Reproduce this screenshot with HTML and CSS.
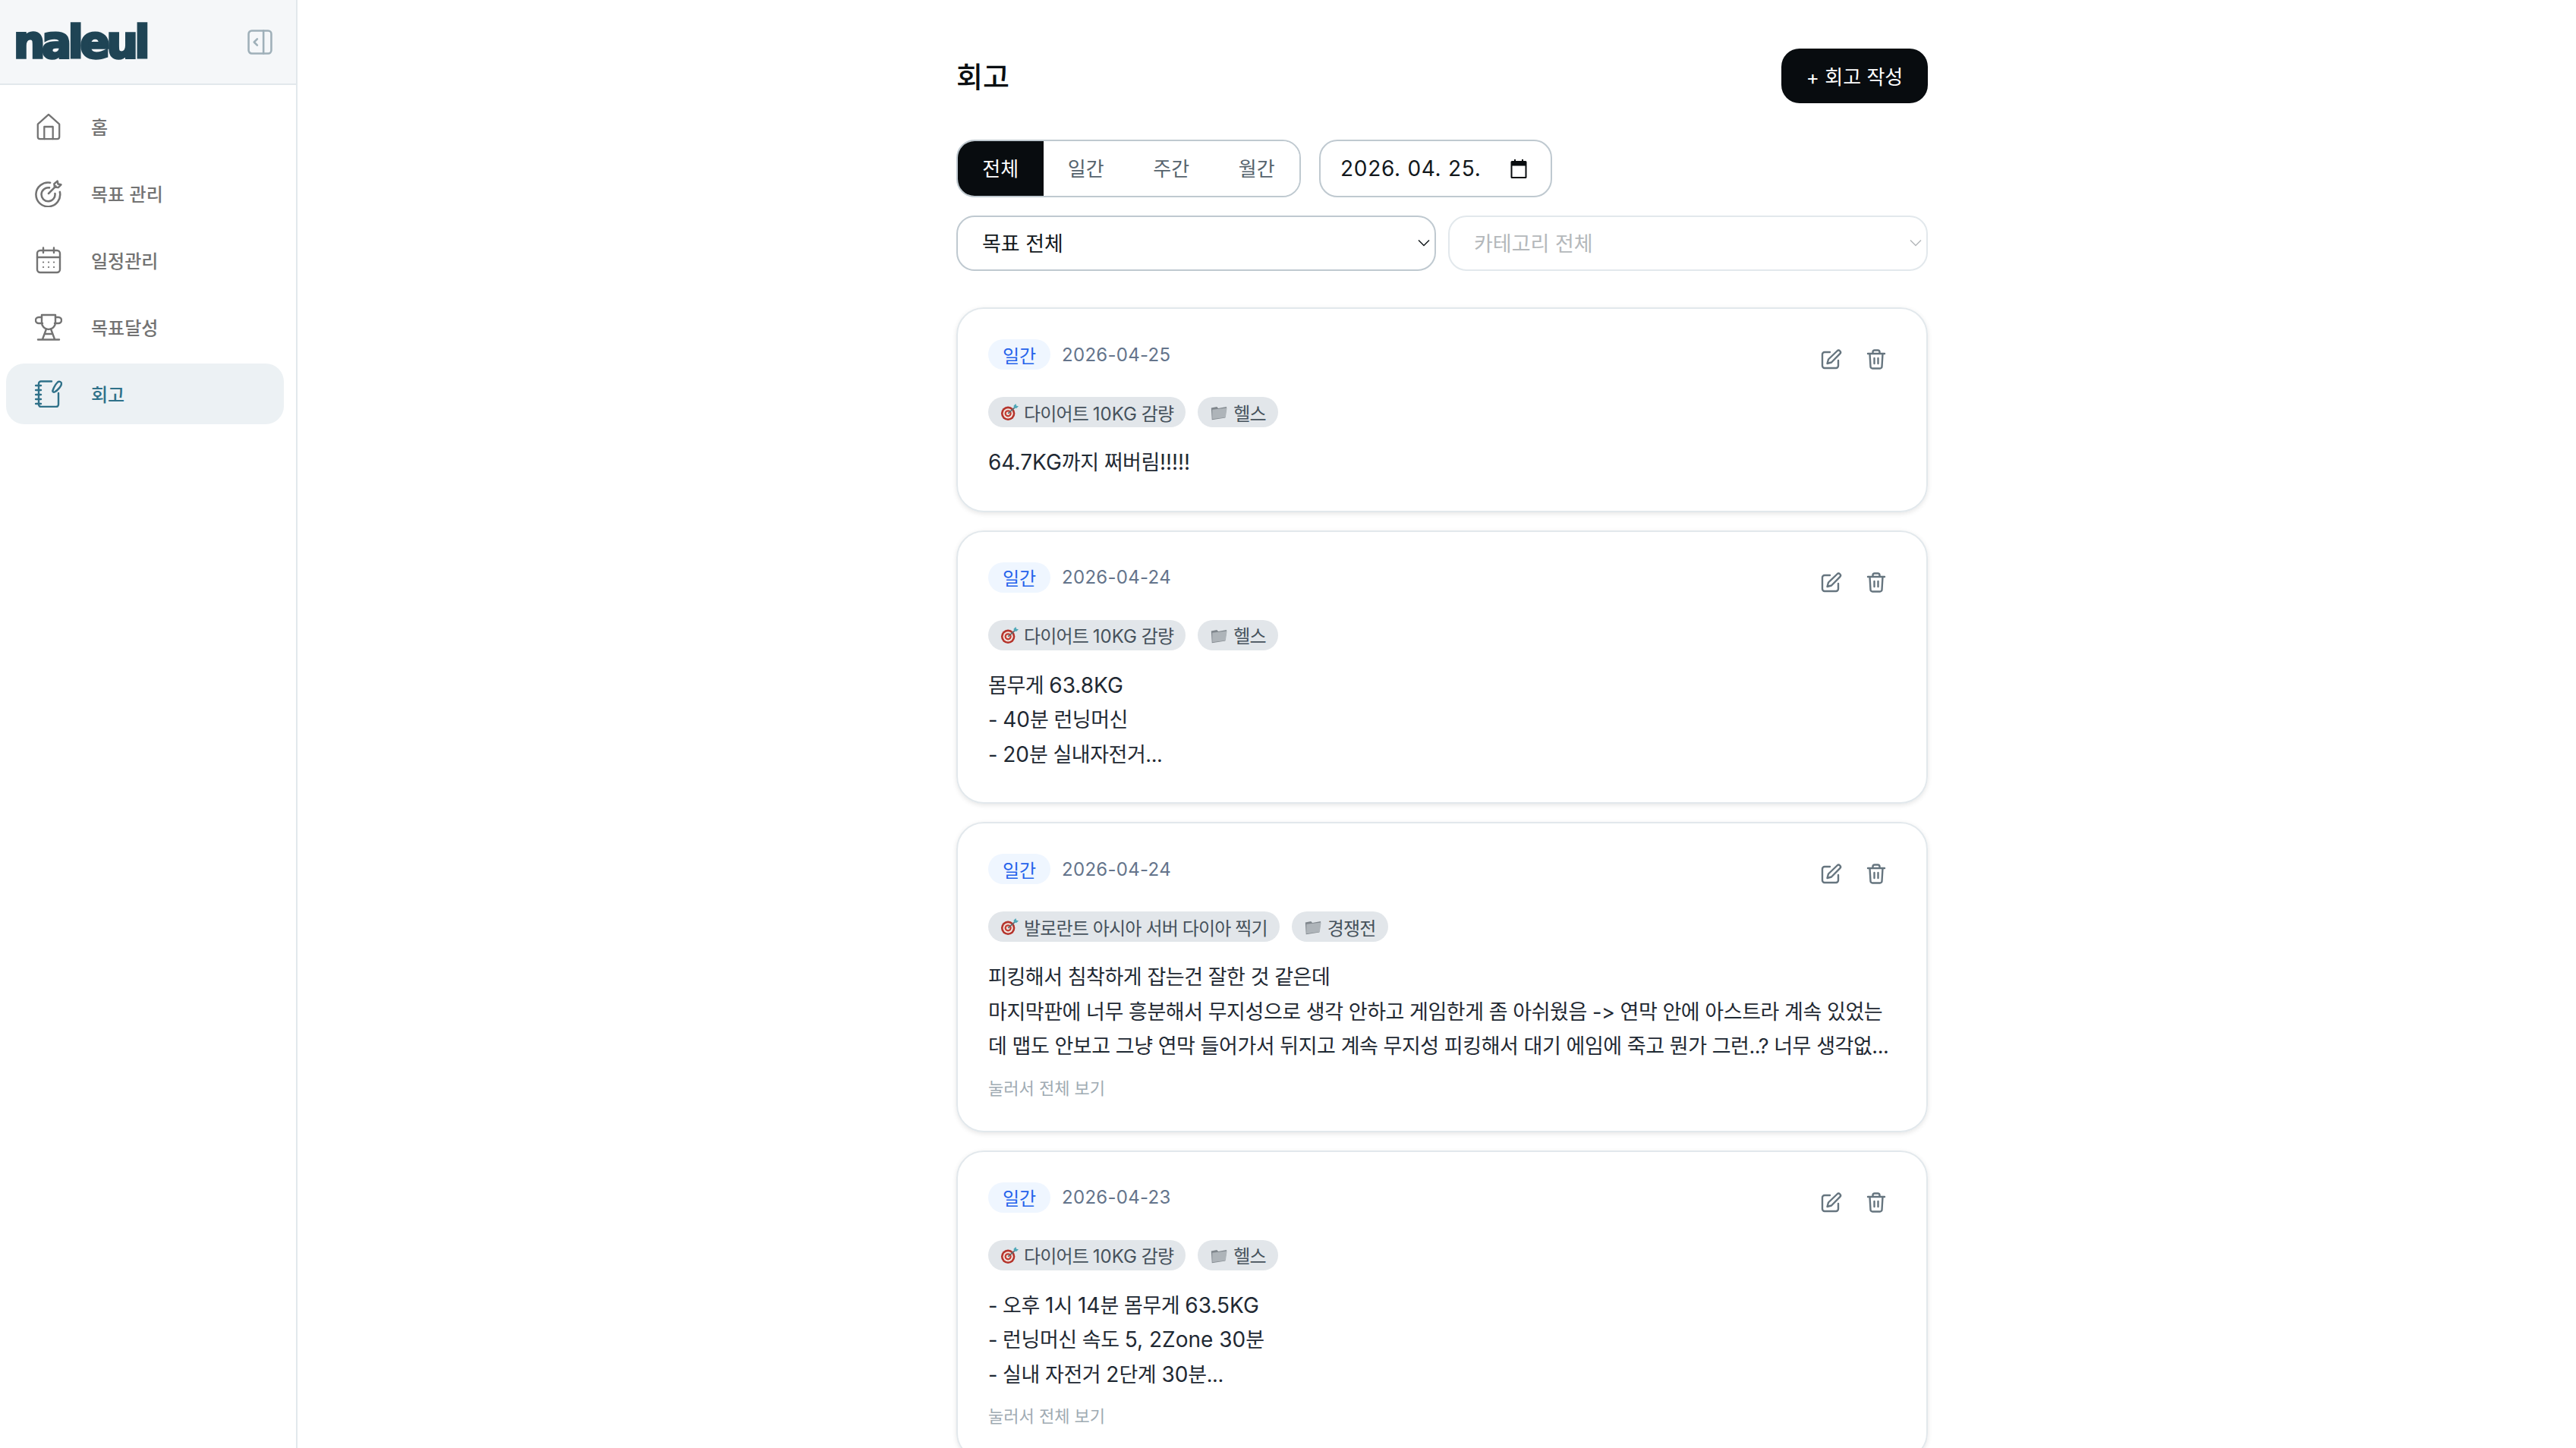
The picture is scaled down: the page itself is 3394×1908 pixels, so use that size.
FILE: index.html
```html
<!DOCTYPE html>
<html lang="ko">
<head>
    <meta charset="UTF-8">
    <meta name="viewport" content="width=device-width, initial-scale=1.0">
    <title>회고</title>
    <link rel="stylesheet" href="styles.css">
</head>
<body>
    <svg class="sprites" width="0" height="0">
        <symbol id="edit" viewBox="0 0 32 32">
            <path d="M15 7H8a3 3 0 0 0-3 3v15a3 3 0 0 0 3 3h15a3 3 0 0 0 3-3v-7" />
            <path d="M24.5 5.5a2.6 2.6 0 0 1 3.7 3.700L17 20.500l-5.500 1.500 1.500-5.500z" />
        </symbol>
        <symbol id="trash" viewBox="0 0 32 32">
            <path d="M5 9h22M11.500 9V7a2.500 2.500 0 0 1 2.500-2.500h4A2.500 2.500 0 0 1 20.500 7v2M7.500 9l1 17a2.500 2.500 0 0 0 2.500 2.500h10a2.500 2.500 0 0 0 2.500-2.500l1-17M13.500 15v7M18.500 15v7" />
        </symbol>
        <symbol id="target" viewBox="0 0 26 26">
            <circle cx="11" cy="15" r="10" fill="#b5342c" />
            <circle cx="11" cy="15" r="7.200" fill="#f2e6e0" />
            <circle cx="11" cy="15" r="5" fill="#c23a30" />
            <circle cx="11" cy="15" r="2.600" fill="#f2e6e0" />
            <path d="M11 15 21 6" stroke="#5e6a70" stroke-width="1.800" />
            <path d="M19 4l3-3 1 3 3 .5-3 3-3.500-.5z" fill="#4fa8b8" />
        </symbol>
        <symbol id="folder" viewBox="0 0 26 26">
            <path d="M2 7l8-1.500 2 2L24 5.500 22 21 3 24z" fill="#7f868c" />
            <path d="M3.500 9.500 24.500 7 22.500 20.500 3.500 23z" fill="#aeb4b9" />
        </symbol>
    </svg>

    <div class="layout">
        <aside class="sidebar">
            <div class="sidebar-head">
                <span class="logo">naleul</span>
                <svg class="collapse" viewBox="0 0 32 32">
                    <rect x="1.500" y="1.500" width="29" height="29" rx="4" />
                    <path d="M20.500 1.500v29M12.500 12l-4 4 4 4" />
                </svg>
            </div>
            <nav class="nav">
                <a class="nav-item">
                    <svg class="nav-icon" viewBox="0 0 34 38">
                        <path d="M2 15.500 17 2l15 13.500V33a3 3 0 0 1-3 3H5a3 3 0 0 1-3-3z" />
                        <path d="M11 36V19h12v17" />
                    </svg>
                    <span>홈</span>
                </a>
                <a class="nav-item">
                    <svg class="nav-icon" viewBox="0 0 34 34">
                        <path d="M19 3.500A15 15 0 1 0 31 15" />
                        <path d="M18 9.800A8.500 8.500 0 1 0 25 17" />
                        <path d="M17 17 26 8M24 5l4-3.500.8 3.700 3.700.8L29 9.500l-4.500-.5z" />
                    </svg>
                    <span>목표 관리</span>
                </a>
                <a class="nav-item">
                    <svg class="nav-icon" viewBox="0 0 34 36">
                        <rect x="2" y="5" width="30" height="29" rx="4" />
                        <path d="M2 14h30M10 1.500V8M24 1.500V8" />
                        <path class="dots" d="M10 20.500h.1M17 20.500h.1M24 20.500h.1M10 27h.1M17 27h.1M24 27h.1" />
                    </svg>
                    <span>일정관리</span>
                </a>
                <a class="nav-item">
                    <svg class="nav-icon" viewBox="0 0 36 36">
                        <path d="M9 2h18v10a9 9 0 0 1-18 0z" />
                        <path d="M9 5H5a3.500 3.500 0 0 0 0 8h5M27 5h4a3.500 3.500 0 0 1 0 8h-5" />
                        <path d="M15 20.500 10 34M21 20.500 26 34M13 27h10M4 34.500h28" />
                    </svg>
                    <span>목표달성</span>
                </a>
                <a class="nav-item active">
                    <svg class="nav-icon" viewBox="0 0 36 36">
                        <path d="M22 1.500H8a3 3 0 0 0-3 3V32a3 3 0 0 0 3 3h20a3 3 0 0 0 3-3V17" />
                        <path d="M1 7h7M1 13h7M1 19h7M1 25h7M1 31h7" />
                        <path d="M30 2.500c2-1.500 5-.5 5 2 0 3-5 9-9 11-1.500.8-3-.5-2.500-2 1-3 4-8.500 6.500-11z" />
                    </svg>
                    <span>회고</span>
                </a>
            </nav>
        </aside>

        <main class="main">
            <div class="content">
                <header class="page-head">
                    <h1>회고</h1>
                    <button class="btn-write">+ 회고 작성</button>
                </header>

                <div class="filter-row">
                    <div class="tabs">
                        <button class="tab on">전체</button>
                        <button class="tab">일간</button>
                        <button class="tab">주간</button>
                        <button class="tab">월간</button>
                    </div>
                    <div class="date-box">
                        <span>2026. 04. 25.</span>
                        <svg class="date-icon" viewBox="0 0 24 26">
                            <path d="M3 3h3V1h2v2h8V1h2v2h3a1.500 1.500 0 0 1 1.500 1.500v20A1.500 1.500 0 0 1 21 26H3a1.500 1.500 0 0 1-1.500-1.500v-20A1.500 1.500 0 0 1 3 3zm.5 6.500V24h17V9.500z" />
                        </svg>
                    </div>
                </div>

                <div class="select-row">
                    <div class="select-box">
                        <span>목표 전체</span>
                        <svg class="chevron" viewBox="0 0 16 10"><path d="M1 1.500l7 7 7-7" /></svg>
                    </div>
                    <div class="select-box disabled">
                        <span>카테고리 전체</span>
                        <svg class="chevron" viewBox="0 0 16 10"><path d="M1 1.500l7 7 7-7" /></svg>
                    </div>
                </div>

                <div class="card-list">
                    <article class="card">
                        <div class="card-meta">
                            <span class="badge">일간</span>
                            <span class="card-date">2026-04-25</span>
                        </div>
                        <div class="card-actions">
                            <svg class="action"><use href="#edit" /></svg>
                            <svg class="action"><use href="#trash" /></svg>
                        </div>
                        <div class="chips">
                            <span class="chip"><svg class="emoji"><use href="#target" /></svg><span>다이어트 <span class="en">10KG</span> 감량</span></span>
                            <span class="chip"><svg class="emoji"><use href="#folder" /></svg><span>헬스</span></span>
                        </div>
                        <div class="card-text">
                            <p><span class="en">64.7KG</span>까지 쩌버림<span class="en">!!!!!</span></p>
                        </div>
                    </article>

                    <article class="card">
                        <div class="card-meta">
                            <span class="badge">일간</span>
                            <span class="card-date">2026-04-24</span>
                        </div>
                        <div class="card-actions">
                            <svg class="action"><use href="#edit" /></svg>
                            <svg class="action"><use href="#trash" /></svg>
                        </div>
                        <div class="chips">
                            <span class="chip"><svg class="emoji"><use href="#target" /></svg><span>다이어트 <span class="en">10KG</span> 감량</span></span>
                            <span class="chip"><svg class="emoji"><use href="#folder" /></svg><span>헬스</span></span>
                        </div>
                        <div class="card-text">
                            <p>몸무게 <span class="en">63.8KG</span></p>
                            <p>- <span class="en">40</span>분 런닝머신</p>
                            <p>- <span class="en">20</span>분 실내자전거...</p>
                        </div>
                    </article>

                    <article class="card">
                        <div class="card-meta">
                            <span class="badge">일간</span>
                            <span class="card-date">2026-04-24</span>
                        </div>
                        <div class="card-actions">
                            <svg class="action"><use href="#edit" /></svg>
                            <svg class="action"><use href="#trash" /></svg>
                        </div>
                        <div class="chips">
                            <span class="chip"><svg class="emoji"><use href="#target" /></svg><span>발로란트 아시아 서버 다이아 찍기</span></span>
                            <span class="chip"><svg class="emoji"><use href="#folder" /></svg><span>경쟁전</span></span>
                        </div>
                        <div class="card-text">
                            <p>피킹해서 침착하게 잡는건 잘한 것 같은데</p>
                            <p>마지막판에 너무 흥분해서 무지성으로 생각 안하고 게임한게 좀 아쉬웠음 -&gt; 연막 안에 아스트라 계속 있었는</p>
                            <p>데 맵도 안보고 그냥 연막 들어가서 뒤지고 계속 무지성 피킹해서 대기 에임에 죽고 뭔가 그런..? 너무 생각없...</p>
                        </div>
                        <div class="more">눌러서 전체 보기</div>
                    </article>

                    <article class="card">
                        <div class="card-meta">
                            <span class="badge">일간</span>
                            <span class="card-date">2026-04-23</span>
                        </div>
                        <div class="card-actions">
                            <svg class="action"><use href="#edit" /></svg>
                            <svg class="action"><use href="#trash" /></svg>
                        </div>
                        <div class="chips">
                            <span class="chip"><svg class="emoji"><use href="#target" /></svg><span>다이어트 <span class="en">10KG</span> 감량</span></span>
                            <span class="chip"><svg class="emoji"><use href="#folder" /></svg><span>헬스</span></span>
                        </div>
                        <div class="card-text">
                            <p>- 오후 <span class="en">1</span>시 <span class="en">14</span>분 몸무게 <span class="en">63.5KG</span></p>
                            <p>- 런닝머신 속도 <span class="en">5, 2Zone 30</span>분</p>
                            <p>- 실내 자전거 <span class="en">2</span>단계 <span class="en">30</span>분...</p>
                        </div>
                        <div class="more">눌러서 전체 보기</div>
                    </article>
                </div>
            </div>
        </main>
    </div>
</body>
</html>
```

FILE: styles.css
```css
* {
    box-sizing: border-box;
}

html, body {
    height: 100%;
    margin: 0;
    overflow: hidden;
}

body {
    background-color: white;
    color: #1f2933;
    font-family: Inter, "Noto Sans CJK KR", sans-serif;
}

.sprites {
    position: absolute;
}

.layout {
    display: flex;
    height: 100%;
}

/* sidebar */
.sidebar {
    width: 392px;
    flex: none;
    border-right: 2px solid #e2e8ec;
}

.sidebar-head {
    height: 112px;
    padding: 0 31px 0 18px;
    display: flex;
    align-items: center;
    justify-content: space-between;
    background-color: #f5f7f9;
    border-bottom: 2px solid #e2e8ec;
}

.logo {
    padding-top: 2px;
    color: #1f4455;
    font-family: "DejaVu Sans", sans-serif;
    font-weight: 700;
    font-size: 58px;
    line-height: 1;
    letter-spacing: -4.300px;
    -webkit-text-stroke: 3.500px #1f4455;
}

.collapse {
    width: 33px;
    height: 33px;
    fill: none;
    stroke: #9fb0b9;
    stroke-width: 2.500;
    stroke-linecap: round;
    stroke-linejoin: round;
}

.nav {
    padding: 15px 16px 15px 8px;
    display: flex;
    flex-direction: column;
    gap: 8px;
}

.nav-item {
    height: 80px;
    padding-left: 38px;
    display: flex;
    align-items: center;
    gap: 38px;
    border-radius: 24px;
    color: #737373;
    font-size: 24px;
    font-weight: 500;
}

.nav-item span {
    padding-bottom: 2px;
}

.nav-item.active {
    background-color: #ecf1f4;
    color: #2f7189;
}

.nav-icon {
    width: 36px;
    height: 36px;
    flex: none;
    fill: none;
    stroke: currentColor;
    stroke-width: 2.400;
    stroke-linecap: round;
    stroke-linejoin: round;
}

.nav-icon .dots {
    stroke-width: 2.200;
}

/* main column */
.main {
    flex: 1;
    min-width: 0;
}

.content {
    width: 1280px;
    margin-left: 868px;
    padding-top: 64px;
}

.page-head {
    height: 72px;
    display: flex;
    align-items: center;
    justify-content: space-between;
}

h1 {
    margin: 0;
    padding-bottom: 3px;
    color: #0a0f12;
    font-size: 38px;
    font-weight: 500;
}

.btn-write {
    height: 72px;
    width: 193px;
    padding-bottom: 3px;
    border: none;
    border-radius: 24px;
    background-color: #080c0f;
    color: white;
    font-family: inherit;
    font-size: 26px;
}

.filter-row {
    margin-top: 48px;
    display: flex;
    gap: 24px;
}

.tabs {
    width: 454px;
    height: 76px;
    display: flex;
    overflow: hidden;
    border: 2px solid #bfc9d0;
    border-radius: 24px;
}

.tab {
    flex: 1;
    padding: 0 0 3px;
    border: none;
    background-color: white;
    color: #56636d;
    font-family: inherit;
    font-size: 26px;
}

.tab.on {
    background-color: #080c0f;
    color: white;
}

.date-box {
    width: 307px;
    height: 76px;
    padding: 0 30px 0 26px;
    display: flex;
    align-items: center;
    justify-content: space-between;
    border: 2px solid #bfc9d0;
    border-radius: 24px;
    color: #12181c;
    font-size: 28px;
    letter-spacing: 0.700px;
}

.date-icon {
    width: 24px;
    height: 26px;
    fill: #080c0f;
}

.select-row {
    margin-top: 24px;
    display: flex;
    gap: 16px;
}

.select-box {
    position: relative;
    flex: 1;
    height: 73px;
    padding: 0 0 2px 32px;
    display: flex;
    align-items: center;
    border: 2px solid #bfc9d0;
    border-radius: 24px;
    color: #12181c;
    font-size: 27px;
}

.select-box.disabled {
    border-color: #e2e8ec;
    color: #b4b8bb;
}

.chevron {
    position: absolute;
    right: 6px;
    top: 29px;
    width: 16px;
    height: 10px;
    fill: none;
    stroke: currentColor;
    stroke-width: 1.500;
}

/* cards */
.card-list {
    margin-top: 48px;
    display: flex;
    flex-direction: column;
    gap: 24px;
}

.card {
    position: relative;
    padding: 40px;
    border: 2px solid #e2e8ec;
    border-radius: 36px;
    box-shadow: 0 2px 6px rgba(0, 0, 0, 0.1);
}

.card-meta {
    height: 40px;
    display: flex;
    align-items: center;
    gap: 15px;
}

.badge {
    width: 82px;
    height: 40px;
    display: flex;
    align-items: center;
    justify-content: center;
    border-radius: 20px;
    background-color: #eff6ff;
    color: #2563eb;
    font-size: 24px;
}

.card-date {
    color: #64748b;
    font-size: 24px;
    letter-spacing: 0.300px;
}

.card-actions {
    position: absolute;
    top: 50px;
    right: 50px;
    display: flex;
    gap: 28px;
}

.action {
    width: 32px;
    height: 32px;
    fill: none;
    stroke: #66757f;
    stroke-width: 2.400;
    stroke-linecap: round;
    stroke-linejoin: round;
}

.chips {
    margin-top: 36px;
    display: flex;
    gap: 16px;
}

.chip {
    height: 40px;
    padding: 0 16px;
    display: flex;
    align-items: center;
    gap: 7px;
    border-radius: 20px;
    background-color: #e2e6ea;
    color: #46525c;
    font-size: 24px;
    letter-spacing: -0.850px;
}

.chip .en {
    letter-spacing: 0;
}

.emoji {
    width: 24px;
    height: 24px;
    flex: none;
}

.card-text {
    margin-top: 24px;
    font-size: 27px;
    letter-spacing: -0.450px;
    line-height: 45.500px;
}

.card-text p {
    margin: 0;
    white-space: nowrap;
}

.card-text .en {
    font-size: 28px;
    letter-spacing: 0;
}

.more {
    margin-top: 16px;
    color: #a0abb3;
    font-size: 22px;
    line-height: 32px;
}
```
